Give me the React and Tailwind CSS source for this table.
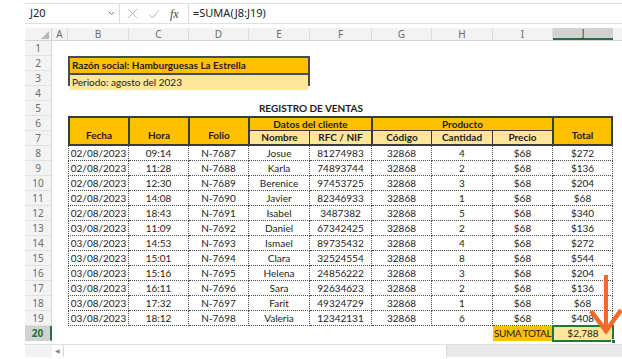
import React from "react";

const ventas = [
  ["02/08/2023", "09:14", "N-7687", "Josue", "81274983", "32868", "4", "$68", "$272"],
  ["02/08/2023", "11:28", "N-7688", "Karla", "74893744", "32868", "2", "$68", "$136"],
  ["02/08/2023", "12:30", "N-7689", "Berenice", "97453725", "32868", "3", "$68", "$204"],
  ["02/08/2023", "14:08", "N-7690", "Javier", "82346933", "32868", "1", "$68", "$68"],
  ["02/08/2023", "18:43", "N-7691", "Isabel", "3487382", "32868", "5", "$68", "$340"],
  ["03/08/2023", "11:09", "N-7692", "Daniel", "67342425", "32868", "2", "$68", "$136"],
  ["03/08/2023", "14:53", "N-7693", "Ismael", "89735432", "32868", "4", "$68", "$272"],
  ["03/08/2023", "15:01", "N-7694", "Clara", "32524554", "32868", "8", "$68", "$544"],
  ["03/08/2023", "15:16", "N-7695", "Helena", "24856222", "32868", "3", "$68", "$204"],
  ["03/08/2023", "16:11", "N-7696", "Sara", "92634623", "32868", "2", "$68", "$136"],
  ["03/08/2023", "17:32", "N-7697", "Farit", "49324729", "32868", "1", "$68", "$68"],
  ["03/08/2023", "18:12", "N-7698", "Valeria", "12342131", "32868", "6", "$68", "$408"],
];

// anchos de columnas B..J
const colW = ["w-[61px]", "w-[60px]", "w-[60px]", "w-[61px]", "w-[62px]", "w-[60px]", "w-[61px]", "w-[60px]", "w-[60px]"];
const headCols = [
  ["A", "w-[16px]"], ["B", "w-[61px]"], ["C", "w-[60px]"], ["D", "w-[60px]"], ["E", "w-[61px]"],
  ["F", "w-[62px]"], ["G", "w-[60px]"], ["H", "w-[61px]"], ["I", "w-[60px]"],
];

function RowNum({ n, active }) {
  if (active) {
    return (
      <div className="h-[15px] w-[27px] shrink-0 flex items-center justify-center bg-[#d2d2d2] border-r-2 border-r-[#217346] border-b border-b-[#d0d0d0] text-[#217346] font-bold">
        {n}
      </div>
    );
  }
  return (
    <div className="h-[15px] w-[27px] shrink-0 flex items-center justify-center bg-[#f3f3f3] border-r border-r-[#d4d4d4] border-b border-b-[#e2e2e2] text-[#6b6b6b]">
      {n}
    </div>
  );
}

function Band({ nums, active, children }) {
  return (
    <div className="flex">
      <div className="flex flex-col font-['Noto_Sans',sans-serif] text-[10px]">
        {nums.map((n) => <RowNum key={n} n={n} active={n === active} />)}
      </div>
      <div className="flex-1 flex pl-[16px] min-w-0 relative">{children}</div>
    </div>
  );
}

function FormulaBar() {
  return (
    <div className="h-[28px] pt-[3px] font-['Noto_Sans',sans-serif] text-[11px] text-[#222]">
      <div className="h-[21px] flex items-center border-t border-b border-[#e0e0e0] bg-white">
        <div className="w-[95px] h-full flex items-center justify-between pl-[5px] pr-[4px] border-r border-[#dcdcdc]">
          <span>J20</span>
          <svg width="7" height="5" viewBox="0 0 7 5"><path d="M1 1l2.5 2.5L6 1" fill="none" stroke="#777" strokeWidth="1" /></svg>
        </div>
        <div className="w-[69px] h-full flex items-center gap-[10px] pl-[7px] border-r border-[#dcdcdc]">
          <svg width="11" height="11" viewBox="0 0 11 11"><path d="M1 1l9 9M10 1l-9 9" stroke="#b5b5b5" strokeWidth="1" /></svg>
          <svg width="12" height="10" viewBox="0 0 12 10"><path d="M1 5.5l3.5 3.5L11 1" fill="none" stroke="#b5b5b5" strokeWidth="1" /></svg>
          <span className="italic font-['Liberation_Serif',serif] text-[12px] text-[#444]">fx</span>
        </div>
        <div className="pl-[4px]">=SUMA(J8:J19)</div>
      </div>
    </div>
  );
}

function ColumnHeaders() {
  return (
    <div className="flex h-[13px] font-['Noto_Sans',sans-serif] text-[10px] text-[#6b6b6b] bg-[#f3f3f3] border-b border-[#d4d4d4]">
      <div className="w-[27px] shrink-0 relative border-r border-[#d4d4d4]">
        <svg className="absolute right-[2px] bottom-[1px]" width="8" height="8" viewBox="0 0 8 8"><path d="M8 0V8H0z" fill="#b9b9b9" /></svg>
      </div>
      {headCols.map(([c, w]) => (
        <div key={c} className={`${w} shrink-0 flex items-center justify-center border-r border-[#dedede]`}>{c}</div>
      ))}
      <div className="w-[60px] shrink-0 flex items-center justify-center bg-[#d2d2d2] border-b-2 border-[#217346] text-[#1f4d33]">J</div>
      <div className="flex-1" />
    </div>
  );
}

function TableHead() {
  const main = "bg-[#ffc000] font-bold flex items-end justify-center pb-[1px]";
  const sub = "bg-[#ffe699] font-bold flex items-center justify-center";
  return (
    <div className="w-[545px] h-[30px] shrink-0 grid grid-cols-[58px_59px_59px_60px_61px_59px_60px_59px_58px] grid-rows-[12px_13px] gap-px p-[2px] bg-[#3b3b3b]">
      <div className={`${main} row-span-2`}>Fecha</div>
      <div className={`${main} row-span-2 border-l border-[#3b3b3b]`}>Hora</div>
      <div className={`${main} row-span-2 border-l border-[#3b3b3b]`}>Folio</div>
      <div className="col-span-2 bg-[#ffc000] font-bold flex items-center justify-center border-l border-[#3b3b3b]">Datos del cliente</div>
      <div className="col-span-3 bg-[#ffc000] font-bold flex items-center justify-center border-l border-[#3b3b3b]">Producto</div>
      <div className={`${main} row-span-2 border-l border-[#3b3b3b]`}>Total</div>
      <div className={`${sub} border-l border-[#3b3b3b]`}>Nombre</div>
      <div className={sub}>RFC / NIF</div>
      <div className={`${sub} border-l border-[#3b3b3b]`}>Código</div>
      <div className={sub}>Cantidad</div>
      <div className={sub}>Precio</div>
    </div>
  );
}

export default function App() {
  return (
    <div className="w-[622px] h-[359px] bg-white pl-[25px] flex flex-col overflow-hidden relative">
      <FormulaBar />
      <ColumnHeaders />
      <div className="flex flex-col font-['Lato',sans-serif] text-[10px] text-[#1c1c1c]">
        <Band nums={[1]} />
        <Band nums={[2, 3]}>
          <div className="w-[242px] h-[30px] flex flex-col gap-[2px] p-[2px] bg-[#4b4b4b]">
            <div className="flex-1 bg-[#ffc000] font-bold flex items-center pl-[2px]">Razón social: Hamburguesas La Estrella</div>
            <div className="flex-1 bg-[#ffe699] flex items-center pl-[2px]">Periodo: agosto del 2023</div>
          </div>
        </Band>
        <Band nums={[4]} />
        <Band nums={[5]}>
          <div className="w-[61px] shrink-0" />
          <div className="w-[364px] shrink-0 flex items-center justify-center font-bold">REGISTRO DE VENTAS</div>
        </Band>
        <Band nums={[6, 7]}>
          <TableHead />
        </Band>
        {ventas.map((r, idx) => (
          <Band key={idx} nums={[idx + 8]}>
            {r.map((v, i) => (
              <div
                key={i}
                className={`${colW[i]} h-[15px] shrink-0 flex items-center justify-center border-r border-b border-dotted border-[#4a4a4a] ${i === 0 ? "border-l" : ""}`}
              >
                {v}
              </div>
            ))}
          </Band>
        ))}
        <Band nums={[20]} active={20}>
          <div className="w-[425px] shrink-0" />
          <div className="w-[60px] h-[15px] shrink-0 bg-[#ffc000] flex items-center pl-px whitespace-nowrap tracking-[-0.4px]">SUMA TOTAL</div>
          <div className="w-[60px] h-[15px] shrink-0 bg-[#ffe699] flex items-center justify-center relative">
            $2,788
            <div className="absolute -left-px -top-px -right-px -bottom-px border-2 border-[#217346]" />
            <div className="absolute -right-[3px] -bottom-[3px] w-[5px] h-[5px] bg-[#217346] border border-white" />
          </div>
        </Band>
      </div>
      <div className="mt-[3px] h-[13px] flex font-['Noto_Sans',sans-serif] border-t border-[#e0e0e0]">
        <div className="w-[27px] bg-[#f3f3f3]" />
        <div className="w-[11px] flex items-center justify-center text-[6px] text-[#888]">◀</div>
        <div className="w-[384px] bg-white border-l border-r border-[#d8d8d8]" />
        <div className="flex-1 bg-[#e9e9e9]" />
      </div>
      <svg className="absolute left-[584px] top-[270px]" width="38" height="66" viewBox="0 0 38 66">
        <path d="M22 5V58" stroke="#f06a28" strokeWidth="4" />
        <path d="M7 41L22 61L37 40" fill="none" stroke="#f06a28" strokeWidth="4.5" strokeLinejoin="miter" />
      </svg>
    </div>
  );
}
